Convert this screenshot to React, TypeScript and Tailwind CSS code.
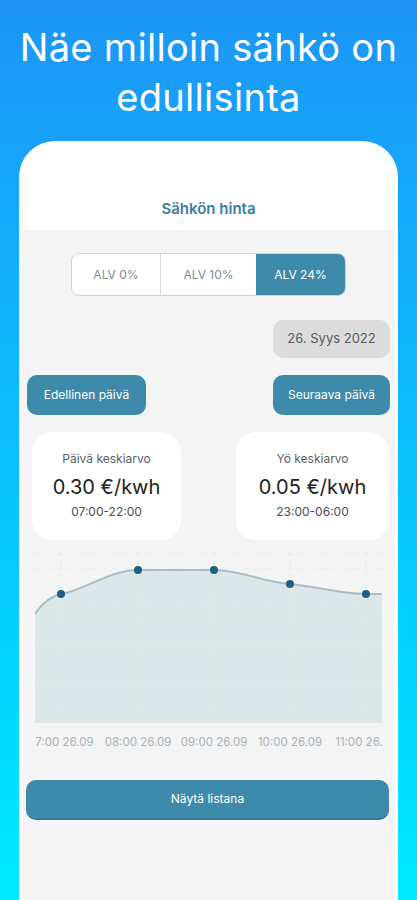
import React from "react";

const font = { fontFamily: "Inter, 'Noto Sans', sans-serif" };

function Chart() {
  const xs = [26, 103, 179, 255, 331];
  const labels = ["07:00 26.09", "08:00 26.09", "09:00 26.09", "10:00 26.09", "11:00 26.09"];
  const pts: [number, number][] = [
    [26, 44],
    [103, 20],
    [179, 20],
    [255, 34],
    [331, 44],
  ];
  const line =
    "M0,64 C8,52 16,46 26,44 C48,41 75,20 103,20 L179,20 C205,20 228,32 255,34 C285,37 305,44 331,44 L347,44";
  return (
    <svg width="347" height="202" viewBox="0 0 347 202" className="block overflow-hidden">
      <defs>
        <clipPath id="c">
          <rect x="0" y="0" width="347" height="202" />
        </clipPath>
      </defs>
      <g clipPath="url(#c)">
        <path d={line + " L347,173 L0,173 Z"} fill="#dce7e9" />
        {[4, 19, 58, 96, 135].map((y) => (
          <line key={y} x1="0" x2="347" y1={y} y2={y} stroke="#e6ecee" strokeWidth="1" strokeDasharray="6 5" />
        ))}
        {xs.map((x) => (
          <line key={x} x1={x} x2={x} y1="0" y2="173" stroke="#e3e9eb" strokeWidth="1" strokeDasharray="6 5" />
        ))}
        <path d={line} fill="none" stroke="#a9bfc4" strokeWidth="2" />
        {pts.map(([x, y]) => (
          <circle key={x} cx={x} cy={y} r="4" fill="#1f5f82" />
        ))}
        {xs.map((x, i) => (
          <text key={x} x={x} y="196" textAnchor="middle" fontSize="11.5" fill="#a7b2ba" style={font}>
            {labels[i]}
          </text>
        ))}
      </g>
    </svg>
  );
}

export default function App() {
  return (
    <div
      className="h-[900px] w-[417px] overflow-hidden bg-gradient-to-b from-[#1c95f6] to-[#00eaff]"
      style={font}
    >
      <h1 className="pt-[22px] text-center text-[38px] leading-[50px] font-normal text-white tracking-[0.3px]">
        Näe milloin sähkö on
        <br />
        edullisinta
      </h1>
      <div className="mx-[19px] mt-[19px] h-[800px] rounded-t-[36px] bg-white px-[3px]">
        <div className="flex h-[89px] items-end justify-center pb-[10px]">
          <span className="text-[15px] font-semibold text-[#3b7e9f]">Sähkön hinta</span>
        </div>
        <div className="h-[700px] bg-[#f4f4f4] pt-[23px]">
          <div className="mx-auto flex h-[43px] w-[275px] overflow-hidden rounded-[8px] border border-[#cfd3d6] bg-white text-[12px]">
            <div className="flex w-[89px] items-center justify-center border-r border-[#d6d9dc] text-[#7b8b97]">
              ALV 0%
            </div>
            <div className="flex w-[95px] items-center justify-center text-[#7b8b97]">ALV 10%</div>
            <div className="flex flex-1 items-center justify-center bg-[#3e8aaa] text-white">ALV 24%</div>
          </div>
          <div className="mt-[24px] flex justify-end pr-[5px]">
            <div className="flex h-[38px] w-[117px] items-center justify-center rounded-[10px] bg-[#dcdcdc] text-[13px] text-[#555a5e]">
              26. Syys 2022
            </div>
          </div>
          <div className="mt-[17px] flex justify-between px-[5px]">
            <div className="flex h-[40px] w-[119px] items-center justify-center rounded-[10px] bg-[#3e8aaa] text-[12px] text-white">
              Edellinen päivä
            </div>
            <div className="flex h-[40px] w-[117px] items-center justify-center rounded-[10px] bg-[#3e8aaa] text-[12px] text-white">
              Seuraava päivä
            </div>
          </div>
          <div className="mt-[17px] flex justify-between pl-[10px] pr-[6px]">
            <div className="flex h-[108px] w-[149px] flex-col items-center rounded-[20px] bg-white pt-[19px]">
              <span className="text-[12px] leading-[16px] text-[#5b5f63]">Päivä keskiarvo</span>
              <span className="mt-[7px] text-[20px] leading-[26px] text-[#222]">0.30 €/kwh</span>
              <span className="mt-[4px] text-[12px] leading-[16px] text-[#4a4e52]">07:00-22:00</span>
            </div>
            <div className="flex h-[108px] w-[153px] flex-col items-center rounded-[20px] bg-white pt-[19px]">
              <span className="text-[12px] leading-[16px] text-[#5b5f63]">Yö keskiarvo</span>
              <span className="mt-[7px] text-[20px] leading-[26px] text-[#222]">0.05 €/kwh</span>
              <span className="mt-[4px] text-[12px] leading-[16px] text-[#4a4e52]">23:00-06:00</span>
            </div>
          </div>
          <div className="mt-[10px] pl-[13px]">
            <Chart />
          </div>
          <div className="mt-[28px] pl-[4px] pr-[6px]">
            <div className="flex h-[40px] items-center justify-center rounded-[10px] border-b-2 border-[#2f7d98] bg-[#3e8aaa] text-[12px] text-white">
              Näytä listana
            </div>
          </div>
        </div>
      </div>
    </div>
  );
}
